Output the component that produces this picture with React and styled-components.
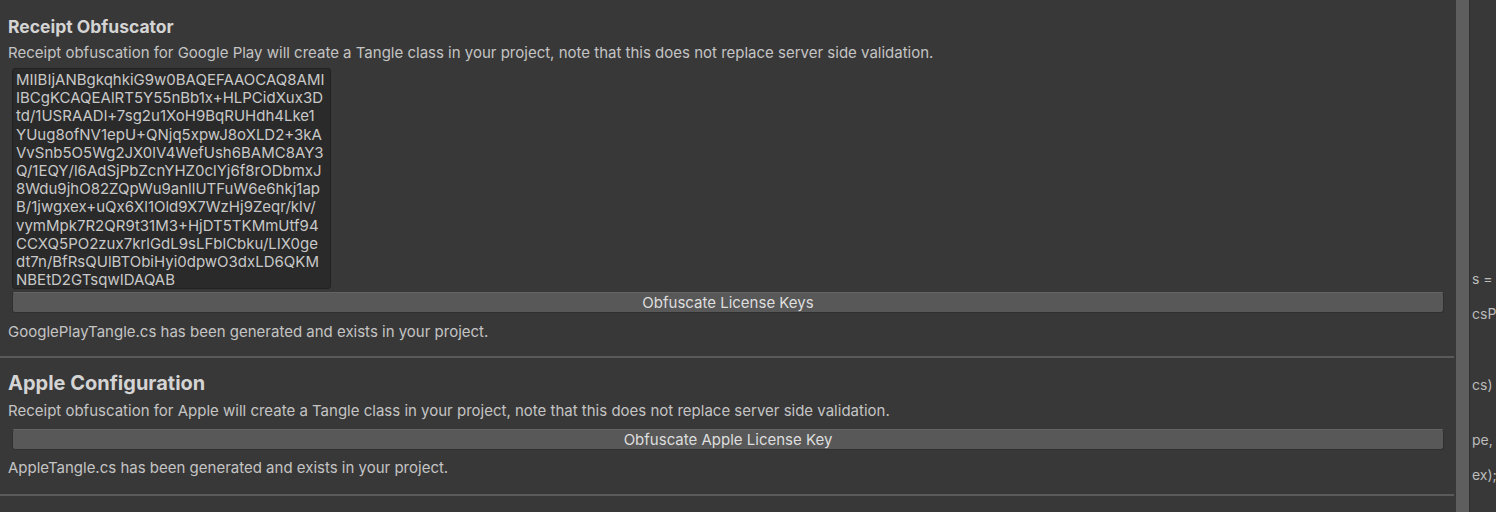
import React from "react";
import styled, { createGlobalStyle } from "styled-components";

const GlobalStyle = createGlobalStyle`
  html, body {
    margin: 0;
    padding: 0;
    background: #383838;
    overflow: hidden;
  }
  body {
    font-family: Inter, "Noto Sans", "Liberation Sans", sans-serif;
    color: #c4c4c4;
    font-size: 15px;
  }
`;

const Window = styled.div`
  display: flex;
  height: 512px;
  width: 1496px;
  overflow: hidden;
`;

const Inspector = styled.div`
  width: 1454px;
  flex: none;
  display: flex;
  flex-direction: column;
`;

const Section = styled.section`
  display: flex;
  flex-direction: column;
  padding: 0 10px 0 8px;
`;

const Title = styled.h2`
  margin: ${({ top }) => top}px 0 0;
  font-size: ${({ size }) => size}px;
  font-weight: 700;
  line-height: ${({ lh }) => lh}px;
  color: #d4d4d4;
`;

const Text = styled.p`
  margin: ${({ top }) => top}px 0 0;
  line-height: 20px;
  font-size: 15px;
  color: #c4c4c4;
  white-space: nowrap;
`;

const KeyBox = styled.div`
  margin: 5px 0 0 4px;
  width: 319px;
  height: 221px;
  box-sizing: border-box;
  padding: 2px 3px;
  background: #2a2a2a;
  border: 1px solid #212121;
  border-radius: 3px;
  font-size: 15px;
  line-height: 18.2px;
  color: #c8c8c8;
  white-space: pre;
  overflow: hidden;
`;

const Button = styled.button`
  margin: ${({ top }) => top}px 0 0 4px;
  height: 21px;
  box-sizing: border-box;
  padding: 0;
  background: #585858;
  border: 1px solid #303030;
  border-top-color: #646464;
  border-radius: 3px;
  font-family: inherit;
  font-size: 15px;
  line-height: 19px;
  color: #dedede;
  text-align: center;
  cursor: pointer;
`;

const Divider = styled.div`
  margin-top: ${({ top }) => top}px;
  height: 2px;
  background: #5a5a5a;
`;

const Scrollbar = styled.div`
  margin-left: 2px;
  width: 13px;
  flex: none;
  background: #5e5e5e;
`;

const CodePane = styled.div`
  flex: 1;
  overflow: hidden;
  border-left: 1px solid #2e2e2e;
  display: flex;
  flex-direction: column;
  padding: 269px 0 0 2px;
`;

const CodeLine = styled.div`
  margin-top: ${({ gap }) => gap}px;
  line-height: 20px;
  font-size: 14px;
  color: #bcbcbc;
  white-space: pre;
`;

const licenseKey = [
  "MIIBIjANBgkqhkiG9w0BAQEFAAOCAQ8AMI",
  "IBCgKCAQEAlRT5Y55nBb1x+HLPCidXux3D",
  "td/1USRAADl+7sg2u1XoH9BqRUHdh4Lke1",
  "YUug8ofNV1epU+QNjq5xpwJ8oXLD2+3kA",
  "VvSnb5O5Wg2JX0lV4WefUsh6BAMC8AY3",
  "Q/1EQY/l6AdSjPbZcnYHZ0clYj6f8rODbmxJ",
  "8Wdu9jhO82ZQpWu9anllUTFuW6e6hkj1ap",
  "B/1jwgxex+uQx6Xl1Old9X7WzHj9Zeqr/klv/",
  "vymMpk7R2QR9t31M3+HjDT5TKMmUtf94",
  "CCXQ5PO2zux7krlGdL9sLFblCbku/LIX0ge",
  "dt7n/BfRsQUlBTObiHyi0dpwO3dxLD6QKM",
  "NBEtD2GTsqwIDAQAB",
];

const codeLines = [
  { text: "s =", gap: 0 },
  { text: "csP", gap: 15 },
  { text: "cs)", gap: 51 },
  { text: "pe,", gap: 35 },
  { text: "ex);", gap: 15 },
];

export default function App() {
  return (
    <>
      <GlobalStyle />
      <Window>
        <Inspector>
          <Section>
            <Title top={16} size={17.5} lh={22}>
              Receipt Obfuscator
            </Title>
            <Text top={5}>
              Receipt obfuscation for Google Play will create a Tangle class in
              your project, note that this does not replace server side
              validation.
            </Text>
            <KeyBox>{licenseKey.join("\n")}</KeyBox>
            <Button top={3}>Obfuscate License Keys</Button>
            <Text top={9}>
              GooglePlayTangle.cs has been generated and exists in your project.
            </Text>
          </Section>
          <Divider top={14} />
          <Section>
            <Title top={13} size={20} lh={24}>
              Apple Configuration
            </Title>
            <Text top={6}>
              Receipt obfuscation for Apple will create a Tangle class in your
              project, note that this does not replace server side validation.
            </Text>
            <Button top={8}>Obfuscate Apple License Key</Button>
            <Text top={8}>
              AppleTangle.cs has been generated and exists in your project.
            </Text>
          </Section>
          <Divider top={16} />
        </Inspector>
        <Scrollbar />
        <CodePane>
          {codeLines.map((line, i) => (
            <CodeLine key={i} gap={line.gap}>
              {line.text}
            </CodeLine>
          ))}
        </CodePane>
      </Window>
    </>
  );
}
